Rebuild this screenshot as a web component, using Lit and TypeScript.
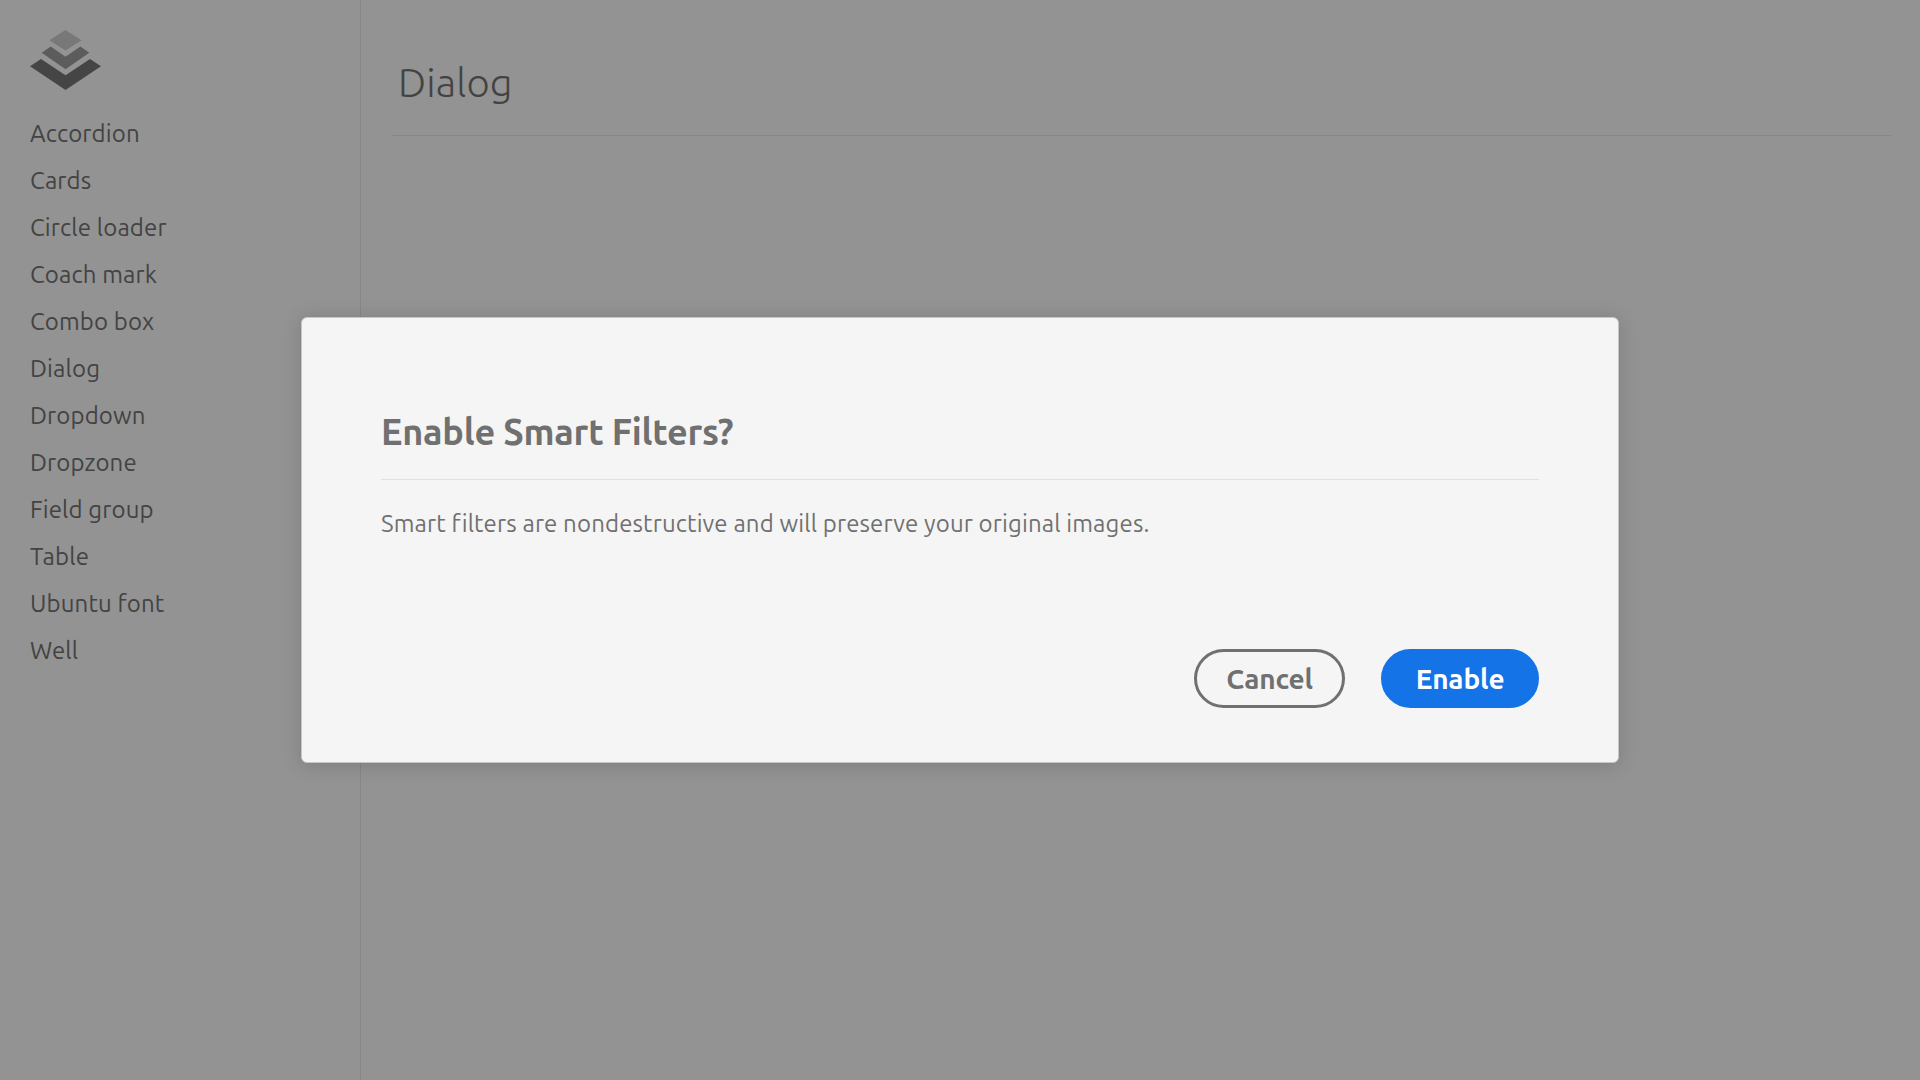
import { LitElement, html, css } from "lit";
import { customElement } from "lit/decorators.js";

const NAV = [
  "Accordion",
  "Cards",
  "Circle loader",
  "Coach mark",
  "Combo box",
  "Dialog",
  "Dropdown",
  "Dropzone",
  "Field group",
  "Table",
  "Ubuntu font",
  "Well",
];

@customElement("app-root")
class AppRoot extends LitElement {
  static styles = css`
    :host {
      display: block;
      position: relative;
      height: 100vh;
      overflow: hidden;
      background: #f5f5f5;
      color: #707070;
      font-family: Ubuntu, "Noto Sans", "Open Sans", sans-serif;
      font-size: 24px;
      font-weight: 400;
      letter-spacing: 0.14px;
    }
    .page { display: flex; height: 100%; }
    .side {
      box-sizing: border-box;
      width: 361px;
      padding: 30px 0 0 30px;
      border-right: 1px solid #e1e1e1;
    }
    .logo { display: block; width: 71px; height: 60px; }
    .nav { display: flex; flex-direction: column; margin-top: 20px; }
    .link { height: 47px; line-height: 47px; }
    .main { flex: 1; padding: 0 29px 0 31px; }
    .top {
      box-sizing: border-box;
      height: 136px;
      padding: 50px 0 0 6px;
      border-bottom: 1px solid #e1e1e1;
    }
    .title {
      margin: 0;
      font-weight: 300;
      font-size: 40px;
      line-height: 66px;
    }
    .scrim {
      position: absolute;
      inset: 0;
      display: flex;
      align-items: center;
      justify-content: center;
      background: rgba(0, 0, 0, 0.4);
    }
    .dialog {
      box-sizing: border-box;
      display: flex;
      flex-direction: column;
      width: 1318px;
      height: 446px;
      padding: 79px 79px 54px 79px;
      border: 1px solid #c6c6c6;
      border-radius: 6px;
      background: #f5f5f5;
      box-shadow: 0 2px 20px rgba(0, 0, 0, 0.15);
    }
    .head {
      box-sizing: border-box;
      height: 83px;
      margin: 0;
      padding: 5px 0 0;
      border-bottom: 1px solid #e1e1e1;
      font-size: 36px;
      font-weight: 600;
      letter-spacing: -0.22px;
      line-height: 60px;
    }
    .body { margin: 0; padding-top: 20px; line-height: 48px; }
    .actions { display: flex; justify-content: flex-end; gap: 36px; margin-top: auto; }
    .btn {
      box-sizing: border-box;
      display: flex;
      align-items: center;
      justify-content: center;
      height: 59px;
      padding: 0;
      border: 3px solid #707070;
      border-radius: 30px;
      background: transparent;
      color: #707070;
      font-family: inherit;
      font-size: 28px;
      font-weight: 600;
      letter-spacing: -0.15px;
      line-height: 53px;
    }
    .cancel { width: 151px; }
    .enable { width: 158px; border-color: #1473e6; background: #1473e6; color: #fff; }
  `;

  render() {
    return html`
      <div class="page">
        <aside class="side">
          <svg class="logo" viewBox="0 0 71 60">
            <path fill="#c8c8c8" d="M35.5 0 51.6 10.2 35.5 20.5 19.3 10.2Z" />
            <path fill="#999" d="M11.7 22.7 20.7 16.5 35.5 26.7 50.3 16.5 59.3 22.7 35.5 39.2Z" />
            <path fill="#747474" d="M0 36.3 11 29 35.5 45.2 60 29 71 36.3 35.5 60Z" />
          </svg>
          <nav class="nav">
            ${NAV.map((label) => html`<a class="link">${label}</a>`)}
          </nav>
        </aside>
        <main class="main">
          <header class="top">
            <h1 class="title">Dialog</h1>
          </header>
        </main>
      </div>
      <div class="scrim">
        <section class="dialog" role="dialog">
          <h2 class="head">Enable Smart Filters?</h2>
          <p class="body">Smart filters are nondestructive and will preserve your original images.</p>
          <div class="actions">
            <button class="btn cancel">Cancel</button>
            <button class="btn enable">Enable</button>
          </div>
        </section>
      </div>
    `;
  }
}
